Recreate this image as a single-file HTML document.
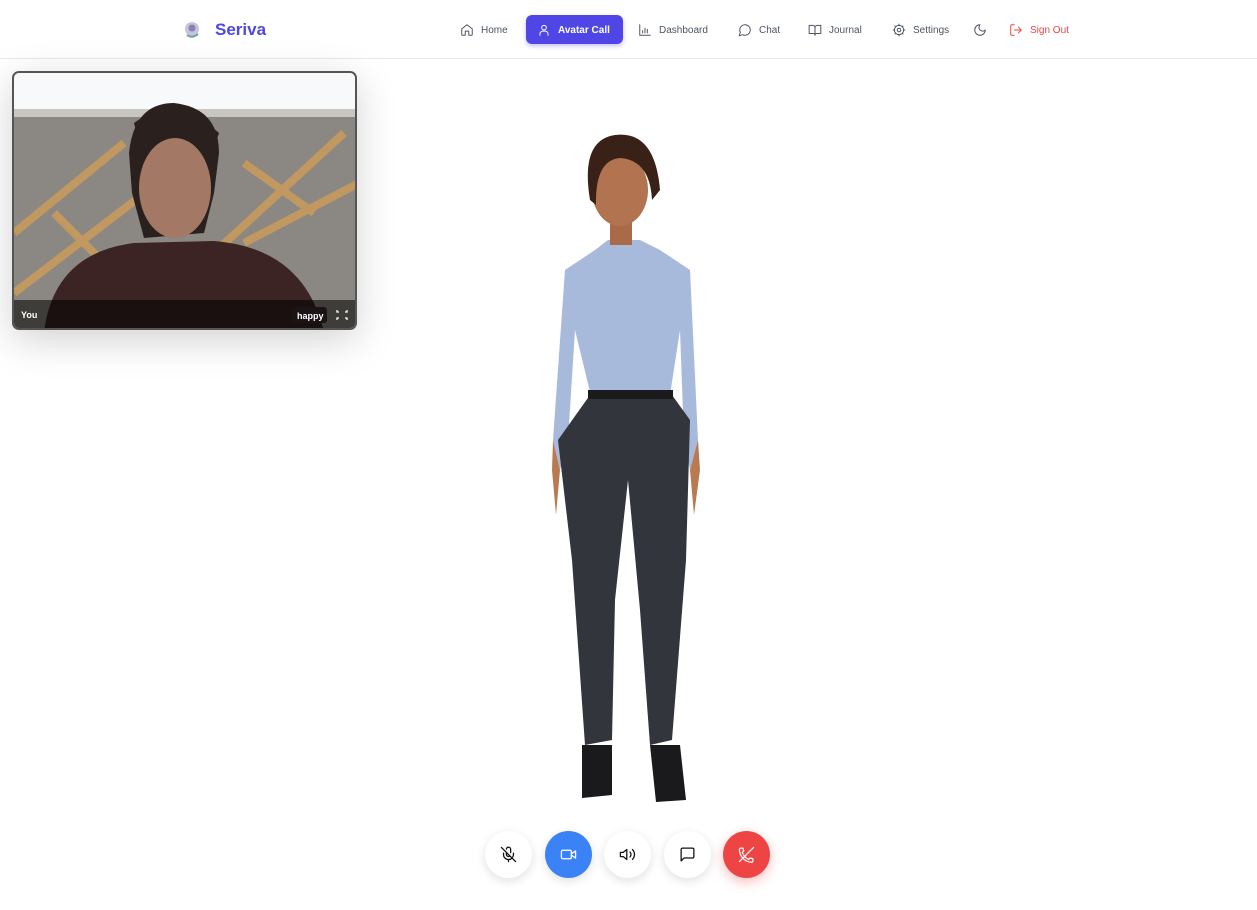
<!DOCTYPE html>
<html><head><meta charset="utf-8"><style>
*{margin:0;padding:0;box-sizing:border-box}
body{width:1257px;height:910px;background:#fff;font-family:"Liberation Sans",sans-serif;position:relative;overflow:hidden}
.nav{position:absolute;left:0;top:0;width:1257px;height:59px;border-bottom:1px solid #e8e8ec;background:#fff}
.logo{position:absolute;top:20px;font-size:17px;font-weight:bold;color:#4f46e5}
.item{position:absolute;top:15px;height:29px;display:flex;align-items:center;gap:7px;font-size:10px;line-height:29px;padding:1px 11px 0;color:#4b5563}
.item svg{width:14px;height:14px;fill:none;stroke:#4b5563;stroke-width:1.7;stroke-linecap:round;stroke-linejoin:round}
.act{background:#4f46e5;color:#fff;border-radius:6px;font-weight:bold;box-shadow:0 2px 5px rgba(79,70,229,.35)}
.act svg{stroke:#fff}
.video{position:absolute;left:12px;top:71px;width:345px;height:259px;border-radius:7px;border:2px solid #555;overflow:hidden;box-shadow:0 10px 40px rgba(0,0,0,.18)}
.btn{position:absolute;top:831px;width:47px;height:47px;border-radius:50%;background:#fff;box-shadow:0 3px 10px rgba(0,0,0,.12);display:flex;align-items:center;justify-content:center}
.btn svg{width:17px;height:17px;fill:none;stroke:#111;stroke-width:1.8;stroke-linecap:round;stroke-linejoin:round}
</style></head><body>
<div class="nav">
<svg style="position:absolute;left:183px;top:20px" width="18" height="20" viewBox="0 0 18 20"><circle cx="9" cy="9" r="7" fill="#c9c2dc"/><circle cx="9" cy="8" r="3.5" fill="#8a80b5"/><path d="M4 15 Q9 19 15 14" stroke="#6aa6a6" stroke-width="2" fill="none"/></svg>
<div class="logo" style="left:215px">Seriva</div>
<div class="item" style="left:449px"><svg viewBox="0 0 24 24"><path d="M3 10l9-7 9 7v10a1 1 0 0 1-1 1h-5v-7H9v7H4a1 1 0 0 1-1-1z"/></svg>Home</div>
<div class="item act" style="left:526px;width:97px"><svg viewBox="0 0 24 24"><circle cx="12" cy="8" r="4"/><path d="M5 21v-2a5 5 0 0 1 5-5h4a5 5 0 0 1 5 5v2"/></svg>Avatar Call</div>
<div class="item" style="left:627px"><svg viewBox="0 0 24 24"><path d="M3 3v18h18M8 17v-4M12 17V9M16 17v-6"/></svg>Dashboard</div>
<div class="item" style="left:727px"><svg viewBox="0 0 24 24"><path d="M7.9 20A9 9 0 1 0 4 16.1L2 22z"/></svg>Chat</div>
<div class="item" style="left:797px"><svg viewBox="0 0 24 24"><path d="M2 4h6a4 4 0 0 1 4 4v13a3 3 0 0 0-3-3H2zM22 4h-6a4 4 0 0 0-4 4v13a3 3 0 0 1 3-3h7z"/></svg>Journal</div>
<div class="item" style="left:881px"><svg viewBox="0 0 24 24"><circle cx="12" cy="12" r="3"/><circle cx="12" cy="12" r="8"/><path d="M12 2v2M12 20v2M2 12h2M20 12h2M5 5l1.5 1.5M17.5 17.5L19 19M5 19l1.5-1.5M17.5 6.5L19 5"/></svg>Settings</div>
<div class="item" style="left:962px"><svg viewBox="0 0 24 24"><path d="M12 3a6 6 0 0 0 9 9 9 9 0 1 1-9-9z"/></svg></div>
<div class="item" style="left:998px;color:#ef4444"><svg viewBox="0 0 24 24" style="stroke:#ef4444"><path d="M9 21H5a2 2 0 0 1-2-2V5a2 2 0 0 1 2-2h4M16 17l5-5-5-5M21 12H9"/></svg>Sign Out</div>
</div>

<div class="video">
<svg width="345" height="259" viewBox="0 0 345 259">
<rect width="345" height="259" fill="#8b8782"/>
<rect width="345" height="38" fill="#f7f9fb"/>
<rect y="36" width="345" height="8" fill="#c8c6c2"/>
<g stroke="#c99a5e" stroke-width="8" opacity=".9"><path d="M0 160 L110 70M0 220 L170 90M200 180 L330 60M230 170 L345 110M40 140 L120 220M230 90 L300 140"/></g>
<path d="M115 80 Q120 30 160 30 Q205 35 205 80 L200 120 L190 160 L130 165 L118 120Z" fill="#2a211e"/>
<ellipse cx="161" cy="115" rx="36" ry="50" fill="#a37864"/>
<path d="M120 50 Q160 20 205 60 L200 75 Q160 55 125 70Z" fill="#2a211e"/>
<path d="M30 259 Q40 180 120 170 L200 168 Q290 175 310 259Z" fill="#3b2423"/>
<rect y="227" width="345" height="32" fill="rgba(0,0,0,.55)"/>
<text x="7" y="245" font-size="9" fill="#fff" font-family="Liberation Sans" font-weight="bold">You</text>
<rect x="278" y="234" width="35" height="16" rx="3" fill="#1a1416"/>
<text x="283" y="246" font-size="9" fill="#fff" font-family="Liberation Sans" font-weight="bold">happy</text>
<path d="M323 237v2h2M333 237v2h-2M323 247v-2h2M333 247v-2h-2" stroke="#fff" stroke-width="1.3" fill="none"/>
</svg>
</div>

<svg style="position:absolute;left:540px;top:125px" width="170" height="690" viewBox="540 125 170 690">
<path d="M608 240 L640 240 L660 250 L690 270 L698 440 L690 470 L684 440 L680 330 L670 395 L590 392 L575 330 L568 440 L560 470 L553 440 L565 270 L595 250Z" fill="#a7badb"/>
<path d="M590 395 L672 395 L690 420 L686 560 L672 740 L650 745 L640 610 L628 480 L615 600 L612 740 L585 745 L572 560 L558 440Z" fill="#33353d"/>
<rect x="588" y="390" width="85" height="9" fill="#1b1b1e"/>
<path d="M582 745 L612 745 L612 795 L582 798Z" fill="#1a1a1c"/>
<path d="M650 745 L680 745 L686 800 L656 802Z" fill="#1a1a1c"/>
<path d="M553 440 L560 470 L556 515 L552 470Z" fill="#b97a52"/>
<path d="M698 440 L690 470 L694 515 L700 470Z" fill="#b97a52"/>
<rect x="610" y="215" width="22" height="30" fill="#a86a48"/>
<ellipse cx="620" cy="190" rx="28" ry="36" fill="#b27450"/>
<path d="M590 200 Q580 140 615 135 Q655 130 660 190 L652 200 Q650 160 620 158 Q595 160 596 205Z" fill="#3a2118"/>
</svg>

<div class="btn" style="left:485px"><svg viewBox="0 0 24 24"><path d="M2 2l20 20M9 9v3a3 3 0 0 0 5 2M15 9.3V5a3 3 0 0 0-6-.6M19 10v2a7 7 0 0 1-1 3.5M5 10v2a7 7 0 0 0 12 5M12 19v3"/></svg></div>
<div class="btn" style="left:545px;background:#3b82f6"><svg viewBox="0 0 24 24" style="stroke:#fff"><rect x="2" y="6" width="14" height="12" rx="2"/><path d="M16 13l6 4V7l-6 4"/></svg></div>
<div class="btn" style="left:604px"><svg viewBox="0 0 24 24"><path d="M11 5L6 9H2v6h4l5 4zM15.5 8.5a5 5 0 0 1 0 7M19 5a10 10 0 0 1 0 14"/></svg></div>
<div class="btn" style="left:664px"><svg viewBox="0 0 24 24"><path d="M21 15a2 2 0 0 1-2 2H7l-4 4V5a2 2 0 0 1 2-2h14a2 2 0 0 1 2 2z"/></svg></div>
<div class="btn" style="left:723px;background:#ef4444;box-shadow:0 4px 12px rgba(239,68,68,.35)"><svg viewBox="0 0 24 24" style="stroke:#fff"><path d="M22 2L2 22M8 13a17 17 0 0 0 7 6l2-2 4 1v3a2 2 0 0 1-2 2A18 18 0 0 1 2 5a2 2 0 0 1 2-2h3l1 4-2 2a15 15 0 0 0 1 2"/></svg></div>
</body></html>
